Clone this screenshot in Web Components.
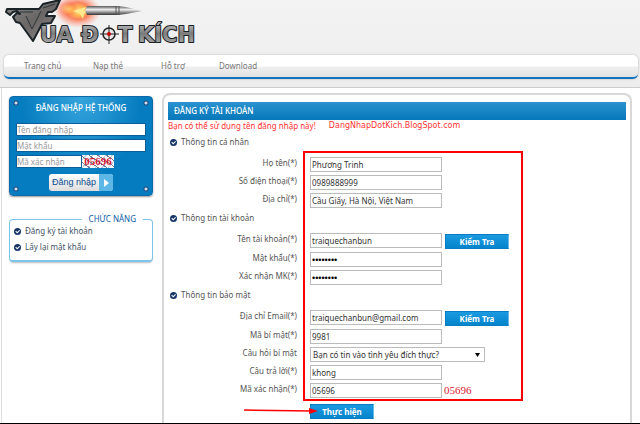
<!DOCTYPE html>
<html lang="vi">
<head>
<meta charset="utf-8">
<title>Vua Đột Kích</title>
<style>
    html { background: #fff; }
    body {
        margin: 0;
        min-height: 100vh;
        display: flex;
        flex-direction: column;
        font-family: "Noto Sans", "Open Sans", sans-serif;
        font-size: 8px;
        color: #555;
        border-bottom: 1px solid #000;
        box-sizing: border-box;
    }
</style>
</head>
<body>
<site-header>
    <a href="#">Trang chủ</a>
    <a href="#">Nạp thẻ</a>
    <a href="#">Hỗ trợ</a>
    <a href="#">Download</a>
</site-header>
<page-columns>
    <login-panel slot="side"></login-panel>
    <feature-box slot="side" heading="CHỨC NĂNG">
        <check-item><a href="#">Đăng ký tài khoản</a></check-item>
        <check-item><a href="#">Lấy lại mật khẩu</a></check-item>
    </feature-box>
    <register-panel heading="ĐĂNG KÝ TÀI KHOẢN">
        <span slot="message">Bạn có thể sử dụng tên đăng nhập này!</span>
        <span slot="site">DangNhapDotKich.BlogSpot.com</span>
        <form-section heading="Thông tin cá nhân">
            <form-row label="Họ tên(*)" value="Phương Trinh"></form-row>
            <form-row label="Số điện thoại(*)" value="0989888999"></form-row>
            <form-row label="Địa chỉ(*)" value="Cầu Giấy, Hà Nội, Việt Nam"></form-row>
        </form-section>
        <form-section heading="Thông tin tài khoản">
            <form-row label="Tên tài khoản(*)" value="traiquechanbun"><blue-button>Kiểm Tra</blue-button></form-row>
            <form-row label="Mật khẩu(*)" type="password" value="12345678"></form-row>
            <form-row label="Xác nhận MK(*)" type="password" value="12345678"></form-row>
        </form-section>
        <form-section heading="Thông tin bảo mật">
            <form-row label="Địa chỉ Email(*)" value="traiquechanbun@gmail.com"><blue-button>Kiểm Tra</blue-button></form-row>
            <form-row label="Mã bí mật(*)" value="9981"></form-row>
            <form-row label="Câu hỏi bí mật" type="select" value="Bạn có tin vào tình yêu đích thực?"></form-row>
            <form-row label="Câu trả lời(*)" value="khong"></form-row>
            <form-row label="Mã xác nhận(*)" value="05696"><captcha-code>05696</captcha-code></form-row>
        </form-section>
        <blue-button slot="submit">Thực hiện</blue-button>
    </register-panel>
</page-columns>

<script>
class SiteHeader extends HTMLElement {
    connectedCallback() {
        this.attachShadow({ mode: 'open' });
        this.shadowRoot.innerHTML = `
            <style>
                :host {
                    display: block;
                    height: 87px;
                    background: linear-gradient(#f3f3f3, #ededed);
                    border-bottom: 1px solid #ccc;
                }
                .logo {
                    display: block;
                    height: 55px;
                }
                nav {
                    display: grid;
                    grid-template-columns: 69px 68px 58px auto;
                    align-items: center;
                    height: 22px;
                    margin: 0 2px 0 4px;
                    padding: 0 20px;
                    border-bottom: 2px solid #1173bd;
                    border-radius: 5px;
                    background: linear-gradient(#fff 50%, #efefef 55%, #e2e2e2);
                    box-shadow: 0 0 2px #aaa;
                }
                ::slotted(a) {
                    line-height: 12px;
                    color: #777;
                    text-decoration: none;
                }
            </style>
            <svg class="logo" width="200" height="55" viewBox="0 0 200 55" role="img" aria-label="Vua Đột Kích">
                <defs>
                    <linearGradient id="steel" x1="0" y1="0" x2="1" y2="1">
                        <stop offset="0" stop-color="#8a8a8a"/>
                        <stop offset=".5" stop-color="#6a6666"/>
                        <stop offset="1" stop-color="#8f8b8b"/>
                    </linearGradient>
                    <linearGradient id="letters" gradientUnits="userSpaceOnUse" x1="0" y1="25" x2="0" y2="42">
                        <stop offset="0" stop-color="#b5b5b5"/>
                        <stop offset=".5" stop-color="#7c7c7c"/>
                        <stop offset="1" stop-color="#a0a0a0"/>
                    </linearGradient>
                    <linearGradient id="shell" x1="0" y1="0" x2="0" y2="1">
                        <stop offset="0" stop-color="#555"/>
                        <stop offset=".4" stop-color="#eee"/>
                        <stop offset="1" stop-color="#333"/>
                    </linearGradient>
                    <radialGradient id="fire">
                        <stop offset="0" stop-color="#fff8a0"/>
                        <stop offset=".25" stop-color="#ffbd4f"/>
                        <stop offset=".5" stop-color="#fa7650" stop-opacity=".9"/>
                        <stop offset="1" stop-color="#ff9a85" stop-opacity="0"/>
                    </radialGradient>
                </defs>
                <ellipse cx="78" cy="11" rx="23" ry="17" fill="url(#fire)"/>
                <ellipse cx="68" cy="9" rx="14" ry="11" fill="url(#fire)" opacity=".5"/>
                <path d="M73 11l13-4-2 4 5-1-5 4-1 5-3-5z" fill="#ffe98c"/>
                <path d="M87 6h30l9 1 16 4-16 3-9 1H87l-2-4z" fill="url(#shell)"/>
                <path d="M116 6v9M119 6v9" stroke="#555"/>
                <path d="M7 9h32l4-5 17-4-4 9-4 3h-4l-2 4h9l-4 7-9 1-9 17-13-18-4-1-3-5 4-4 3 1-3-3-4 1-3 3-4-3z" fill="url(#steel)" stroke="#1b2428" stroke-width="2" stroke-linejoin="round"/>
                <path d="M20 12h13M26 16l6 13 9-18M43 8l12-4" fill="none" stroke="#2b3438" stroke-width="1"/>
                <g font-family="DejaVu Sans, sans-serif" font-weight="bold" font-size="21" fill="url(#letters)" stroke="#1a2226" stroke-width="2" stroke-linejoin="round" paint-order="stroke">
                    <text x="40" y="42">UA</text>
                    <text x="81" y="42">Đ</text>
                    <text x="118" y="42">T</text>
                    <text x="138" y="42">KÍCH</text>
                </g>
                <circle cx="109" cy="34" r="6" fill="#e8e8e8" stroke="#222" stroke-width="1.5"/>
                <path d="M109 25v19M100 34h19" stroke="#222" stroke-width="1"/>
                <circle cx="109" cy="34" r="2" fill="#c00"/>
            </svg>
            <nav><slot></slot></nav>
        `;
    }
}
customElements.define('site-header', SiteHeader);

class PageColumns extends HTMLElement {
    connectedCallback() {
        this.attachShadow({ mode: 'open' });
        this.shadowRoot.innerHTML = `
            <style>
                :host {
                    flex: 1;
                    display: flex;
                    gap: 9px;
                    margin: 0 0 0 1px;
                    padding: 5px 8px 0 7px;
                    border-left: 1px solid #ddd;
                }
                aside {
                    width: 144px;
                    padding-top: 3px;
                }
                main {
                    flex: 1;
                    display: flex;
                }
            </style>
            <aside><slot name="side"></slot></aside>
            <main><slot></slot></main>
        `;
    }
}
customElements.define('page-columns', PageColumns);

class CaptchaCode extends HTMLElement {
    connectedCallback() {
        this.attachShadow({ mode: 'open' });
        this.shadowRoot.innerHTML = `
            <style>
                :host {
                    display: inline-block;
                    font: 11px/14px "Liberation Serif", serif;
                    color: #dc1832;
                }
                :host([noisy]) {
                    width: 32px;
                    text-align: center;
                    font-weight: bold;
                    line-height: 13px;
                    background:
                        repeating-linear-gradient(35deg, transparent 0 4px, #779 4px 5px),
                        repeating-linear-gradient(-50deg, #fff 0 4px, #bcd 4px 5px);
                }
            </style>
            <slot></slot>
        `;
    }
}
customElements.define('captcha-code', CaptchaCode);

class LoginPanel extends HTMLElement {
    connectedCallback() {
        this.attachShadow({ mode: 'open' });
        this.shadowRoot.innerHTML = `
            <style>
                :host {
                    display: block;
                    box-sizing: border-box;
                    height: 100px;
                    padding: 5px 6px 0;
                    border: 1px solid #0b69a8;
                    border-radius: 4px;
                    background:
                        radial-gradient(circle at 6px 6px, #cde 1px, #247 2px, transparent 3px),
                        radial-gradient(circle at 136px 6px, #cde 1px, #247 2px, transparent 3px),
                        radial-gradient(circle at 6px 92px, #cde 1px, #247 2px, transparent 3px),
                        radial-gradient(circle at 136px 92px, #cde 1px, #247 2px, transparent 3px),
                        radial-gradient(ellipse at 50% 0, #35a4dc, #057cbf 60%);
                    box-shadow: 0 1px 2px #999;
                }
                h2 {
                    margin: 0 0 9px;
                    font-size: 8px;
                    font-weight: 500;
                    line-height: 12px;
                    text-align: center;
                    color: #fff;
                }
                form {
                    display: flex;
                    flex-direction: column;
                    gap: 3px;
                }
                input {
                    box-sizing: border-box;
                    width: 100%;
                    height: 13px;
                    padding: 0;
                    border: 1px solid #0a5f99;
                    font: 8px "Noto Sans", sans-serif;
                }
                input::placeholder {
                    color: #999;
                }
                .code {
                    display: flex;
                }
                .code input {
                    width: 66px;
                }
                button {
                    display: flex;
                    align-self: center;
                    width: 64px;
                    height: 17px;
                    margin-top: 3px;
                    padding: 0;
                    border: 0;
                    border-radius: 3px;
                    overflow: hidden;
                    background: linear-gradient(#fff, #ddd);
                    font: 9px/16px "Liberation Sans", sans-serif;
                    color: #0a4c8e;
                }
                button span {
                    flex: 1;
                }
                button svg {
                    background: #5cb6e6;
                }
            </style>
            <h2>ĐĂNG NHẬP HỆ THỐNG</h2>
            <form>
                <input placeholder="Tên đăng nhập" aria-label="Tên đăng nhập">
                <input type="password" placeholder="Mật khẩu" aria-label="Mật khẩu">
                <div class="code">
                    <input placeholder="Mã xác nhận" aria-label="Mã xác nhận">
                    <captcha-code noisy>05696</captcha-code>
                </div>
                <button type="button">
                    <span>Đăng nhập</span>
                    <svg width="14" height="17"><path d="M5 5l5 4-5 4z" fill="#fff"/></svg>
                </button>
            </form>
        `;
    }
}
customElements.define('login-panel', LoginPanel);

const checkIcon = `
    <svg width="7" height="7" viewBox="0 0 7 7">
        <circle cx="3.5" cy="3.5" r="3.5" fill="#173568"/>
        <path d="M1.7 3.2l1.5 1.6 2.4-2.5" fill="none" stroke="#fff" stroke-width="1.1"/>
    </svg>`;

class CheckItem extends HTMLElement {
    connectedCallback() {
        this.attachShadow({ mode: 'open' });
        this.shadowRoot.innerHTML = `
            <style>
                :host {
                    display: flex;
                    align-items: center;
                    gap: 4px;
                    line-height: 12px;
                }
                ::slotted(a) {
                    color: #456;
                    text-decoration: none;
                }
            </style>
            ${checkIcon}
            <slot></slot>
        `;
    }
}
customElements.define('check-item', CheckItem);

class FeatureBox extends HTMLElement {
    connectedCallback() {
        this.attachShadow({ mode: 'open' });
        this.shadowRoot.innerHTML = `
            <style>
                :host {
                    display: block;
                    margin-top: 17px;
                }
                fieldset {
                    margin: 0;
                    padding: 0 4px 7px;
                    border: 1px solid #7cc4ea;
                    border-bottom-width: 2px;
                    border-radius: 4px;
                    box-shadow: 0 2px 2px -1px #bbb;
                }
                legend {
                    margin: 0 5px 0 auto;
                    padding: 0 7px;
                    line-height: 12px;
                    color: #0c5aa6;
                }
                .items {
                    display: grid;
                    gap: 4px;
                }
            </style>
            <fieldset>
                <legend>${this.getAttribute('heading')}</legend>
                <div class="items"><slot></slot></div>
            </fieldset>
        `;
    }
}
customElements.define('feature-box', FeatureBox);

class BlueButton extends HTMLElement {
    connectedCallback() {
        this.attachShadow({ mode: 'open' });
        this.shadowRoot.innerHTML = `
            <style>
                :host {
                    display: inline-flex;
                }
                button {
                    width: 64px;
                    height: 15px;
                    padding: 0;
                    border: 1px solid #0a7cc4;
                    border-right-color: #6bb9e6;
                    background: linear-gradient(#1b9ae0, #0484cb);
                    font: bold 8px/12px "Noto Sans", sans-serif;
                    color: #fff;
                }
            </style>
            <button type="button"><slot></slot></button>
        `;
    }
}
customElements.define('blue-button', BlueButton);

class FormSection extends HTMLElement {
    connectedCallback() {
        this.attachShadow({ mode: 'open' });
        this.shadowRoot.innerHTML = `
            <style>
                :host {
                    display: block;
                }
                h3 {
                    display: flex;
                    align-items: center;
                    gap: 4px;
                    margin: 0;
                    padding: 4px 2px 9px;
                    font-size: 8px;
                    font-weight: normal;
                    line-height: 12px;
                }
                .rows {
                    display: grid;
                    gap: 3px;
                }
            </style>
            <h3>${checkIcon}${this.getAttribute('heading')}</h3>
            <div class="rows"><slot></slot></div>
        `;
    }
}
customElements.define('form-section', FormSection);

class FormRow extends HTMLElement {
    connectedCallback() {
        const type = this.getAttribute('type') || 'text';
        const value = this.getAttribute('value');
        const field = type === 'select'
            ? `<select id="field"><option>${value}</option></select>`
            : `<input id="field" type="${type}" value="${value}">`;
        this.attachShadow({ mode: 'open' });
        this.shadowRoot.innerHTML = `
            <style>
                :host {
                    display: flex;
                    align-items: flex-start;
                }
                label {
                    width: 129px;
                    margin-right: 13px;
                    line-height: 11px;
                    text-align: right;
                }
                input, select {
                    box-sizing: border-box;
                    width: 132px;
                    height: 15px;
                    padding: 0 1px;
                    border: 1px solid #bbb;
                    border-radius: 0;
                    background: #fff;
                    font: 8px "Noto Sans", sans-serif;
                    color: #333;
                }
                input[type="password"] {
                    font: 9px "Liberation Sans", sans-serif;
                    color: #000;
                }
                select {
                    width: 175px;
                    padding: 0 2px;
                    appearance: none;
                    background: #fff url('data:image/svg+xml,<svg xmlns="http://www.w3.org/2000/svg" width="5" height="4"><path d="M0 0h5L2.5 4z"/></svg>') no-repeat right 4px center;
                }
                ::slotted(blue-button) {
                    margin: 1px 0 0 3px;
                }
                ::slotted(captcha-code) {
                    margin-left: 2px;
                }
            </style>
            <label for="field">${this.getAttribute('label')}</label>
            ${field}
            <slot></slot>
        `;
    }
}
customElements.define('form-row', FormRow);

class RegisterPanel extends HTMLElement {
    connectedCallback() {
        this.attachShadow({ mode: 'open' });
        this.shadowRoot.innerHTML = `
            <style>
                :host {
                    flex: 1;
                    display: block;
                    padding: 7px 4px 3px;
                    border: 2px solid #d8d8d8;
                    border-bottom: 0;
                    border-radius: 8px 8px 0 0;
                }
                h2 {
                    margin: 0;
                    padding: 0 6px;
                    font-size: 8px;
                    font-weight: 500;
                    line-height: 18px;
                    color: #fff;
                    background: linear-gradient(#2b93ce, #0577ba);
                }
                .notice {
                    display: flex;
                    gap: 13px;
                    line-height: 12px;
                    color: #f33;
                }
                slot[name="site"] {
                    display: block;
                    font-family: "DejaVu Sans", sans-serif;
                }
                form {
                    position: relative;
                }
                .submit {
                    margin: 6px 0 0 142px;
                    display: flex;
                }
                /* annotation drawn over the form */
                .frame {
                    position: absolute;
                    top: 19px;
                    left: 135px;
                    width: 216px;
                    bottom: 18px;
                    border: 2px solid #f00;
                    pointer-events: none;
                }
                .arrow {
                    position: absolute;
                    left: 76px;
                    bottom: 3px;
                }
            </style>
            <h2>${this.getAttribute('heading')}</h2>
            <div class="notice"><slot name="message"></slot><slot name="site"></slot></div>
            <form>
                <slot></slot>
                <div class="submit"><slot name="submit"></slot></div>
                <div class="frame"></div>
                <svg class="arrow" width="76" height="10">
                    <path d="M0 4l68 1" stroke="#f00" stroke-width="1.5"/>
                    <path d="M65 2l9 3-9 3z" fill="#f00"/>
                </svg>
            </form>
        `;
    }
}
customElements.define('register-panel', RegisterPanel);
</script>
</body>
</html>
